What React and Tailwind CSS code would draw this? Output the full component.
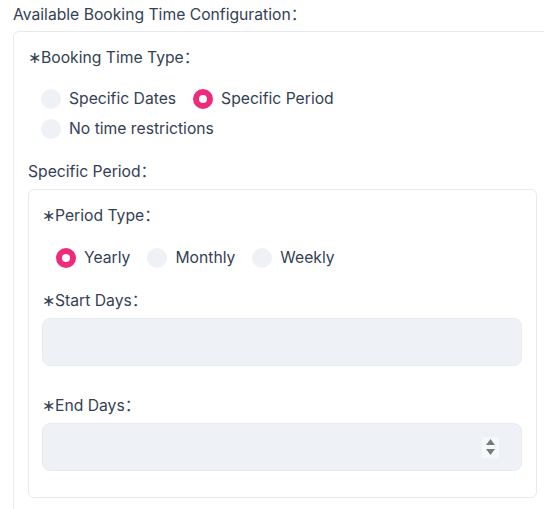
import React from "react";

const Radio = ({ checked, label }) => (
  <label className="flex items-center h-[30px] mr-[17px]">
    {checked ? (
      <span className="w-5 h-5 rounded-full border-[6px] border-[#ef2a7c] bg-white box-border" />
    ) : (
      <span className="w-5 h-5 rounded-full bg-[#eef1f5]" />
    )}
    <span className="ml-2">{label}</span>
  </label>
);

const Label = ({ children, className = "" }) => (
  <div className={"h-[22px] leading-[22px] " + className}>
    <span>∗</span>
    {children}
  </div>
);

export default function App() {
  return (
    <div
      className="w-[544px] h-[509px] overflow-hidden bg-white text-[15.7px] leading-[22px] text-[#334155] pl-[13px] pt-[4px]"
      style={{ fontFamily: "Inter, 'Noto Sans CJK SC', sans-serif" }}
    >
      <div className="h-[22px]">Available Booking Time Configuration：</div>
      <div className="mt-[5px] w-[560px] border border-[#e6e9ee] rounded-md pl-[14px] pt-[15px] h-[600px]">
        <Label>Booking Time Type：</Label>
        <div className="mt-[15px] pl-[13px]">
          <div className="flex">
            <Radio label="Specific Dates" />
            <Radio checked label="Specific Period" />
          </div>
          <div className="flex">
            <Radio label="No time restrictions" />
          </div>
        </div>
        <div className="mt-[17px] h-[22px]">Specific Period：</div>
        <div className="mt-[6px] w-[509px] border border-[#e6e9ee] rounded-md pl-[13px] pr-[14px] pt-[15px] pb-[26px]">
          <Label>Period Type：</Label>
          <div className="mt-[16px] pl-[14px] flex">
            <Radio checked label="Yearly" />
            <Radio label="Monthly" />
            <Radio label="Weekly" />
          </div>
          <Label className="mt-[17px]">Start Days：</Label>
          <div className="mt-[6px] h-[48px] rounded-lg bg-[#eef1f5] border border-[#e8ecf0]" />
          <Label className="mt-[29px]">End Days：</Label>
          <div className="mt-[6px] h-[48px] rounded-lg bg-[#eef1f5] border border-[#e8ecf0] flex items-center justify-end pr-[22px]">
            <div className="w-[17px] h-[21px] bg-[#f7f8fa] flex flex-col items-center justify-center gap-[4px]">
              <svg width="9" height="6" viewBox="0 0 9 6">
                <path d="M4.5 0 L9 6 L0 6 Z" fill="#7a7a7a" />
              </svg>
              <svg width="9" height="6" viewBox="0 0 9 6">
                <path d="M0 0 L9 0 L4.5 6 Z" fill="#7a7a7a" />
              </svg>
            </div>
          </div>
        </div>
      </div>
    </div>
  );
}
